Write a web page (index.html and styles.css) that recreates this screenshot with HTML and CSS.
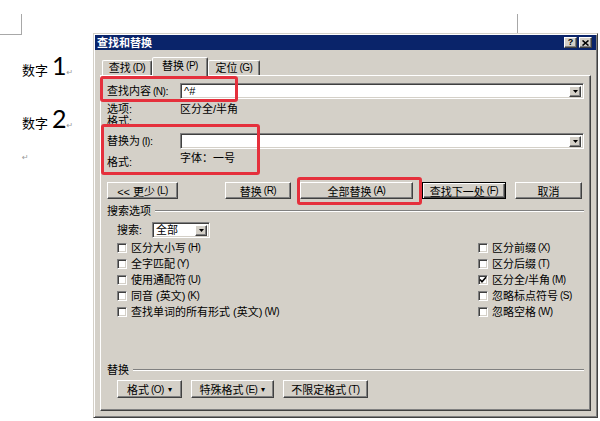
FILE: index.html
```html
<!DOCTYPE html>
<html lang="zh-CN">
<head>
    <meta charset="UTF-8">
    <meta name="viewport" content="width=device-width, initial-scale=1.0">
    <title>查找和替换</title>
    <link rel="stylesheet" href="styles.css">
</head>
<body>

    <div class="doc">
        <div class="doc-top">
            <div class="corner-l"></div>
            <div class="corner-r"></div>
        </div>
        <p class="para p1">数字 <span class="num">1</span><span class="ret">↵</span></p>
        <p class="para p2">数字 <span class="num">2</span><span class="ret">↵</span></p>
        <p class="para p3"><span class="ret">↵</span></p>
    </div>

    <div class="dialog">
        <div class="titlebar">
            <span class="title">查找和替换</span>
            <div class="tb-btns">
                <span class="tb-btn help">?</span>
                <span class="tb-btn">
                    <svg width="7" height="6" viewBox="0 0 7 6"><path d="M0.5 0.5 L6.5 5.5 M6.5 0.5 L0.5 5.5" stroke="#000" stroke-width="1.6"/></svg>
                </span>
            </div>
        </div>

        <div class="dlg-body">
            <div class="tabs">
                <div class="tab">查找<span class="mn">(D)</span></div>
                <div class="tab active">替换<span class="mn">(P)</span></div>
                <div class="tab">定位<span class="mn">(G)</span></div>
            </div>

            <div class="panel">
                <div class="field-row">
                    <label class="lbl">查找内容<span class="mn">(N)</span>:</label>
                    <div class="combo">
                        <span class="combo-text">^#</span>
                        <span class="drop"><svg width="5" height="3" viewBox="0 0 5 3"><path d="M0 0 H5 L2.5 3 Z" fill="#000"/></svg></span>
                    </div>
                </div>

                <div class="opt-rows">
                    <div class="opt"><span class="opt-k">选项:</span><span>区分全/半角</span></div>
                    <div class="opt"><span class="opt-k">格式:</span></div>
                </div>

                <div class="field-row r2">
                    <label class="lbl">替换为<span class="mn">(I)</span>:</label>
                    <div class="combo">
                        <span class="combo-text"></span>
                        <span class="drop"><svg width="5" height="3" viewBox="0 0 5 3"><path d="M0 0 H5 L2.5 3 Z" fill="#000"/></svg></span>
                    </div>
                </div>

                <div class="fmt-row">
                    <span class="opt-k fmt-k">格式:</span>
                    <span class="fmt-v">字体：一号</span>
                </div>

                <div class="btn-row">
                    <button class="btn b-less">&lt;&lt; 更少<span class="mn">(L)</span></button>
                    <button class="btn b-rep">替换<span class="mn">(R)</span></button>
                    <button class="btn b-all">全部替换<span class="mn">(A)</span></button>
                    <button class="btn default b-next">查找下一处<span class="mn">(F)</span></button>
                    <button class="btn b-cancel">取消</button>
                </div>

                <div class="group-head"><span>搜索选项</span><i class="etch"></i></div>

                <div class="search-row">
                    <span class="search-k">搜索<span class="mn">:</span></span>
                    <div class="select">
                        <span class="combo-text">全部</span>
                        <span class="drop"><svg width="5" height="3" viewBox="0 0 5 3"><path d="M0 0 H5 L2.5 3 Z" fill="#000"/></svg></span>
                    </div>
                </div>

                <div class="checks">
                    <div class="chk"><span class="box"></span>区分大小写<span class="mn">(H)</span></div>
                    <div class="chk"><span class="box"></span>区分前缀<span class="mn">(X)</span></div>
                    <div class="chk"><span class="box"></span>全字匹配<span class="mn">(Y)</span></div>
                    <div class="chk"><span class="box"></span>区分后缀<span class="mn">(T)</span></div>
                    <div class="chk"><span class="box"></span>使用通配符<span class="mn">(U)</span></div>
                    <div class="chk"><span class="box"><svg width="8" height="8" viewBox="0 0 8 8"><path d="M1 3.5 L3 5.8 L7 1.2" stroke="#000" stroke-width="1.6" fill="none"/></svg></span>区分全/半角<span class="mn">(M)</span></div>
                    <div class="chk"><span class="box"></span>同音 (英文)<span class="mn">(K)</span></div>
                    <div class="chk"><span class="box"></span>忽略标点符号<span class="mn">(S)</span></div>
                    <div class="chk"><span class="box"></span>查找单词的所有形式 (英文)<span class="mn">(W)</span></div>
                    <div class="chk"><span class="box"></span>忽略空格<span class="mn">(W)</span></div>
                </div>

                <div class="bottom">
                    <div class="group-head"><span>替换</span><i class="etch"></i></div>
                    <div class="btn-row b2">
                        <button class="btn b-fmt">格式<span class="mn">(O)</span> <span class="arr">▾</span></button>
                        <button class="btn b-spec">特殊格式<span class="mn">(E)</span> <span class="arr">▾</span></button>
                        <button class="btn b-nofmt">不限定格式<span class="mn">(T)</span></button>
                    </div>
                </div>
            </div>
        </div>
    </div>

    <!-- 标注框 -->
    <div class="mark-box m1"></div>
    <div class="mark-box m2"></div>
    <div class="mark-box m3"></div>

</body>
</html>
```

FILE: styles.css
```css
body {
    margin: 0;
    background-color: #fff;
    font-family: "Noto Sans CJK SC", sans-serif;
    color: #000;
}

/* 文档区域 */
.doc {
    padding-top: 14px;
}

.doc-top {
    display: flex;
    justify-content: space-between;
    width: 518px;
}

.corner-l {
    width: 21px;
    height: 20px;
    border-right: 1px solid #a8a8a8;
    border-bottom: 1px solid #a8a8a8;
}

.corner-r {
    width: 0;
    height: 20px;
    border-left: 1px solid #a8a8a8;
}

.para {
    margin: 0;
    padding-left: 22px;
    font-size: 13px;
    height: 28px;
    line-height: 28px;
}

.p1 {
    margin-top: 16px;
}

.p2 {
    margin-top: 25px;
}

.p3 {
    margin-top: 9px;
}

.num {
    font-family: Lato, "Liberation Sans", sans-serif;
    font-size: 25px;
    margin-left: 1px;
}

.ret {
    font-family: "DejaVu Sans", sans-serif;
    font-size: 8px;
    color: #999;
}

/* 对话框 */
.dialog {
    position: absolute;
    left: 93px;
    top: 33px;
    width: 505px;
    height: 385px;
    box-sizing: border-box;
    padding: 1px;
    background-color: #d4d0c8;
    border: 1px solid;
    border-color: #d4d0c8 #404040 #404040 #d4d0c8;
    box-shadow: inset 1px 1px #fff, inset -1px -1px #808080;
    font-family: "Liberation Sans", "Noto Sans CJK SC", sans-serif;
    font-size: 11px;
    line-height: 12px;
}

.titlebar {
    height: 15px;
    background-color: #0a246a;
    display: flex;
    align-items: center;
    justify-content: space-between;
    padding: 0 4px 0 2px;
}

.title {
    color: #fff;
    font-weight: bold;
    font-size: 11px;
}

.tb-btns {
    display: flex;
    gap: 2px;
}

.tb-btn {
    width: 13px;
    height: 11px;
    box-sizing: border-box;
    background-color: #d4d0c8;
    border: 1px solid;
    border-color: #fff #404040 #404040 #fff;
    box-shadow: inset -1px -1px #808080;
    display: flex;
    align-items: center;
    justify-content: center;
}

.help {
    font-family: "Liberation Sans", sans-serif;
    font-weight: bold;
    font-size: 9px;
    line-height: 9px;
}

.dlg-body {
    padding: 7px 5px 5px 5px;
}

.tabs {
    display: flex;
    align-items: flex-end;
    height: 18px;
    padding-left: 2px;
    position: relative;
    z-index: 1;
}

.tab {
    height: 15px;
    box-sizing: border-box;
    border: 1px solid;
    border-bottom: none;
    border-color: #fff #404040 transparent #fff;
    box-shadow: inset -1px 0 #808080;
    border-radius: 2px 2px 0 0;
    display: flex;
    align-items: center;
    justify-content: center;
    width: 50px;
}

.tab.active {
    height: 19px;
    width: 56px;
    margin-bottom: -1px;
    background-color: #d4d0c8;
    padding-bottom: 2px;
}

.tab:last-child {
    width: 52px;
}

.mn {
    font-family: "Liberation Sans", sans-serif;
    font-size: 10px;
    letter-spacing: -0.5px;
    margin-left: 2px;
}

.panel {
    height: 336px;
    box-sizing: border-box;
    border: 1px solid;
    border-color: #fff #404040 #404040 #fff;
    box-shadow: inset -1px -1px #808080;
    padding: 7px 6px 12px 6px;
    display: flex;
    flex-direction: column;
}

.field-row {
    display: flex;
    height: 16px;
}

.lbl {
    width: 73px;
    line-height: 16px;
}

.combo,
.select {
    flex: 1;
    background-color: #fff;
    box-sizing: border-box;
    border: 1px solid;
    border-color: #808080 #fff #fff #808080;
    box-shadow: inset 1px 1px #404040, inset -1px -1px #d4d0c8;
    display: flex;
    align-items: center;
    justify-content: space-between;
    padding: 0 2px 0 3px;
}

.combo-text {
    line-height: 12px;
}

.drop {
    width: 12px;
    height: 11px;
    box-sizing: border-box;
    background-color: #d4d0c8;
    border: 1px solid;
    border-color: #fff #404040 #404040 #fff;
    box-shadow: inset -1px -1px #808080;
    display: flex;
    align-items: center;
    justify-content: center;
}

.opt-rows {
    margin-top: 4px;
}

.opt {
    display: flex;
    height: 12px;
}

.opt-k {
    width: 73px;
}

.r2 {
    margin-top: 6px;
}

.fmt-row {
    display: flex;
    margin-top: 2px;
    height: 17px;
}

.fmt-k {
    padding-top: 5px;
}

.fmt-v {
    padding-top: 1px;
}

.btn-row {
    display: flex;
    margin-top: 14px;
    gap: 9px;
}

.btn {
    height: 17px;
    box-sizing: border-box;
    background-color: #d4d0c8;
    border: 1px solid;
    border-color: #fff #404040 #404040 #fff;
    box-shadow: inset -1px -1px #808080;
    display: flex;
    align-items: center;
    justify-content: center;
    padding: 0;
    font-family: inherit;
    font-size: 11px;
    color: #000;
}

.btn.default {
    border-color: #000;
    box-shadow: inset 1px 1px #fff, inset -1px -1px #404040, inset -2px -2px #808080;
}

.b-less { width: 71px; margin-right: 38px; }
.b-rep { width: 66px; }
.b-all { width: 113px; }
.b-next { width: 84px; }
.b-cancel { width: 67px; }

.group-head {
    display: flex;
    align-items: center;
    margin-top: 6px;
    height: 12px;
}

.etch {
    flex: 1;
    height: 1px;
    margin-left: 4px;
    background-color: #808080;
    border-bottom: 1px solid #fff;
}

.search-row {
    display: flex;
    align-items: center;
    margin-top: 5px;
    padding-left: 10px;
    height: 16px;
}

.search-k {
    width: 35px;
}

.search-k .mn {
    margin-left: 0;
}

.select {
    flex: none;
    width: 58px;
    height: 16px;
}

.checks {
    display: grid;
    grid-template-columns: 361px auto;
    grid-auto-rows: 16px;
    margin-top: 2px;
    padding-left: 10px;
}

.chk {
    display: flex;
    align-items: center;
}

.box {
    width: 10px;
    height: 10px;
    box-sizing: border-box;
    margin-right: 4px;
    background-color: #fff;
    border: 1px solid;
    border-color: #808080 #fff #fff #808080;
    box-shadow: inset 1px 1px #404040, inset -1px -1px #d4d0c8;
    display: flex;
    align-items: center;
    justify-content: center;
}

.bottom {
    margin-top: auto;
}

.b2 {
    margin-top: 4px;
    padding-left: 10px;
}

.b2 .btn {
    height: 18px;
}

.b-fmt { width: 65px; }
.b-spec { width: 83px; }
.b-nofmt { width: 85px; }

.arr {
    font-size: 8px;
    margin-left: 4px;
}

/* 红色标注框 */
.mark-box {
    position: absolute;
    border: 3px solid #e5303c;
    border-radius: 3px;
    box-sizing: border-box;
}

.m1 { left: 100px; top: 76px; width: 138px; height: 26px; }
.m2 { left: 101px; top: 124px; width: 159px; height: 51px; }
.m3 { left: 297px; top: 177px; width: 125px; height: 28px; }
```
